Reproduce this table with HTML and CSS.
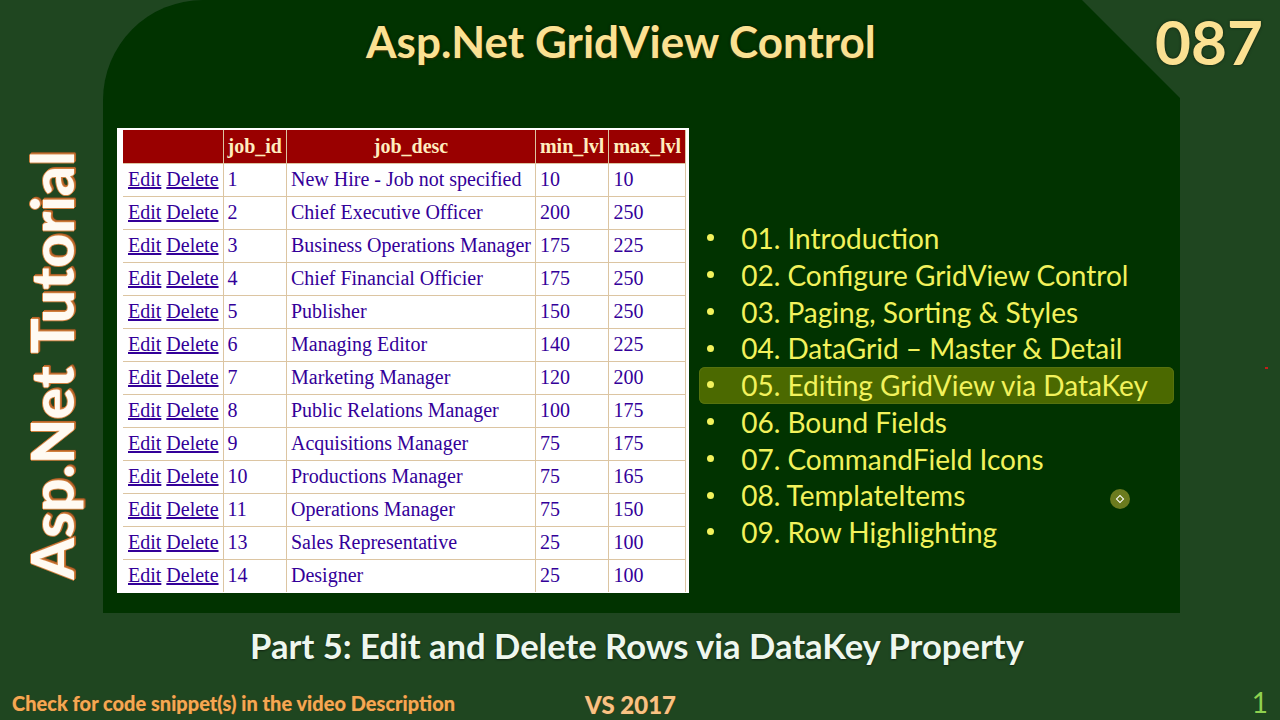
FILE: index.html
```html
<!DOCTYPE html>
<html lang="en">
<head>
<meta charset="utf-8">
<title>Asp.Net GridView Control</title>
<link rel="stylesheet" href="styles.css">
</head>
<body>
<div class="stage">
  <div class="top">
    <div class="side"><div class="vtitle">Asp.Net Tutorial</div></div>
    <div class="panel">
      <div class="head"><h1 class="title">Asp.Net GridView Control</h1></div>
      <div class="content">
        <div class="gridbox">
          <table class="grid">
            <thead>
              <tr><th></th><th>job_id</th><th>job_desc</th><th>min_lvl</th><th>max_lvl</th></tr>
            </thead>
            <tbody>
              <tr><td><a href="#">Edit</a> <a href="#">Delete</a></td><td>1</td><td>New Hire - Job not specified</td><td>10</td><td>10</td></tr>
              <tr><td><a href="#">Edit</a> <a href="#">Delete</a></td><td>2</td><td>Chief Executive Officer</td><td>200</td><td>250</td></tr>
              <tr><td><a href="#">Edit</a> <a href="#">Delete</a></td><td>3</td><td>Business Operations Manager</td><td>175</td><td>225</td></tr>
              <tr><td><a href="#">Edit</a> <a href="#">Delete</a></td><td>4</td><td>Chief Financial Officier</td><td>175</td><td>250</td></tr>
              <tr><td><a href="#">Edit</a> <a href="#">Delete</a></td><td>5</td><td>Publisher</td><td>150</td><td>250</td></tr>
              <tr><td><a href="#">Edit</a> <a href="#">Delete</a></td><td>6</td><td>Managing Editor</td><td>140</td><td>225</td></tr>
              <tr><td><a href="#">Edit</a> <a href="#">Delete</a></td><td>7</td><td>Marketing Manager</td><td>120</td><td>200</td></tr>
              <tr><td><a href="#">Edit</a> <a href="#">Delete</a></td><td>8</td><td>Public Relations Manager</td><td>100</td><td>175</td></tr>
              <tr><td><a href="#">Edit</a> <a href="#">Delete</a></td><td>9</td><td>Acquisitions Manager</td><td>75</td><td>175</td></tr>
              <tr><td><a href="#">Edit</a> <a href="#">Delete</a></td><td>10</td><td>Productions Manager</td><td>75</td><td>165</td></tr>
              <tr><td><a href="#">Edit</a> <a href="#">Delete</a></td><td>11</td><td>Operations Manager</td><td>75</td><td>150</td></tr>
              <tr><td><a href="#">Edit</a> <a href="#">Delete</a></td><td>13</td><td>Sales Representative</td><td>25</td><td>100</td></tr>
              <tr><td><a href="#">Edit</a> <a href="#">Delete</a></td><td>14</td><td>Designer</td><td>25</td><td>100</td></tr>
            </tbody>
          </table>
        </div>
        <ul class="topics">
          <li>01. Introduction</li>
          <li>02. Configure GridView Control</li>
          <li>03. Paging, Sorting &amp; Styles</li>
          <li>04. DataGrid – Master &amp; Detail</li>
          <li class="active">05. Editing GridView via DataKey</li>
          <li>06. Bound Fields</li>
          <li>07. CommandField Icons</li>
          <li>08. TemplateItems</li>
          <li>09. Row Highlighting</li>
        </ul>
      </div>
    </div>
    <div class="rightcol"></div>
  </div>
  <div class="caption">Part 5: Edit and Delete Rows via DataKey Property</div>
  <div class="footer">
    <span class="note">Check for code snippet(s) in the video Description</span>
    <span class="vs">VS 2017</span>
    <span class="pageno">1</span>
  </div>
  <div class="episode">087</div>
  <div class="cursor"><span class="cursor-dot"></span></div>
  <div class="reddot"></div>
</div>
</body>
</html>
```
FILE: styles.css
```css
html, body {
  margin: 0;
  padding: 0;
}
body {
  background: #1f4620;
  font-family: "Lato", "Open Sans", sans-serif;
}
.stage {
  position: relative;
  width: 1280px;
  height: 720px;
  overflow: hidden;
  background: #1f4620;
  display: flex;
  flex-direction: column;
}
.top {
  display: flex;
  height: 613px;
}
.side {
  width: 103px;
  box-sizing: border-box;
  padding-top: 118px;
  display: flex;
  align-items: center;
  justify-content: center;
}
.vtitle {
  writing-mode: vertical-rl;
  transform: rotate(180deg);
  font-family: "Lato", sans-serif;
  font-weight: 900;
  font-size: 59px;
  line-height: 1;
  color: #fffaf2;
  white-space: nowrap;
  text-shadow:
    1px 0 0 #d0813f, -1px 0 0 #d0813f, 0 1px 0 #d0813f, 0 -1px 0 #d0813f,
    2px 1px 0 #b8642a, 1px 2px 0 #b8642a, 2px 2px 1px #8a4a1f;
}
.panel {
  width: 1077px;
  background: #013300;
  border-top-left-radius: 100px;
  clip-path: polygon(0 0, calc(100% - 98px) 0, 100% 98px, 100% 100%, 0 100%);
  display: flex;
  flex-direction: column;
  box-sizing: border-box;
  padding-left: 14px;
}
.rightcol {
  flex: 1;
}
.head {
  height: 128px;
  box-sizing: border-box;
  padding-top: 19px;
  padding-left: 249px;
}
.title {
  margin: 0;
  font-family: "Lato", sans-serif;
  font-weight: 700;
  font-size: 44px;
  line-height: 1;
  color: #fbe192;
  white-space: nowrap;
  text-shadow: 0 0 3px rgba(0, 0, 0, 0.7), 0 1px 2px rgba(120, 80, 0, 0.6);
}
.content {
  display: flex;
  align-items: flex-start;
}
.gridbox {
  background: #ffffff;
  padding: 2px 3px 0 6px;
}
.grid {
  border-collapse: collapse;
  font-family: "Liberation Serif", "Times New Roman", serif;
  font-size: 20px;
  color: #330099;
}
.grid th, .grid td {
  border: 1px solid #dcc5a2;
  padding: 4px 4px 6px 4px;
  line-height: 22px;
  white-space: nowrap;
  text-align: left;
}
.grid th {
  background: #990000;
  color: #ffedbf;
  font-weight: 700;
  text-align: center;
}
.grid tr:first-child th {
  border-top-color: #990000;
}
.grid th:first-child, .grid td:first-child {
  border-left-color: #ffffff;
}
.grid th:first-child {
  border-left-color: #990000;
}
.grid tbody tr:last-child td {
  border-bottom-color: #ffffff;
}
.grid a {
  color: #330099;
  text-decoration: underline;
}
.topics {
  list-style: none;
  margin: 92px 0 0 10px;
  padding: 0;
  width: 475px;
}
.topics li {
  position: relative;
  height: 36.75px;
  line-height: 36.75px;
  padding-left: 42px;
  font-family: "Lato", sans-serif;
  font-size: 28px;
  color: #f2f25c;
  white-space: nowrap;
}
.topics li::before {
  content: "";
  position: absolute;
  left: 8px;
  top: 50%;
  width: 7px;
  height: 7px;
  margin-top: -4px;
  border-radius: 50%;
  background: #f2f25c;
}
.topics li.active {
  background: #4b6900;
  border-radius: 6px;
  box-shadow: inset 0 0 0 1px #56720e;
}
.caption {
  margin-top: 16px;
  padding-right: 6px;
  font-family: "Lato", sans-serif;
  font-weight: 700;
  font-size: 34.6px;
  line-height: 1;
  color: #eef7ee;
  text-align: center;
  white-space: nowrap;
  text-shadow: 0 1px 2px rgba(0, 0, 0, 0.5);
}
.footer {
  flex: 1;
  display: flex;
  align-items: flex-end;
  padding: 0 12px 0 12px;
}
.note {
  width: 573px;
  margin-bottom: 7px;
  font-family: "Lato", sans-serif;
  font-weight: 900;
  font-size: 20px;
  line-height: 1;
  color: #f4a853;
  white-space: nowrap;
  text-shadow: 0 0 1px #7a3d10;
}
.vs {
  margin-bottom: 3px;
  font-family: "Lato", sans-serif;
  font-weight: 900;
  font-size: 24px;
  line-height: 1;
  color: #f8c283;
  white-space: nowrap;
  text-shadow: 0 0 1px #7a3d10;
}
.pageno {
  margin-left: auto;
  margin-bottom: 4px;
  font-family: "Lato", sans-serif;
  font-size: 28px;
  line-height: 1;
  color: #8fd14f;
}
.episode {
  position: absolute;
  top: 10px;
  right: 17px;
  font-family: "Lato", sans-serif;
  font-weight: 700;
  font-size: 62px;
  line-height: 1;
  color: #fbe192;
  text-shadow: 0 0 3px rgba(0, 0, 0, 0.6);
}
.cursor {
  position: absolute;
  left: 1110px;
  top: 489px;
  width: 20px;
  height: 20px;
  border-radius: 50%;
  background: #6b7b1e;
  display: flex;
  align-items: center;
  justify-content: center;
}
.cursor-dot {
  width: 4px;
  height: 4px;
  border: 1px solid #ffffff;
  transform: rotate(45deg);
}
.reddot {
  position: absolute;
  left: 1265px;
  top: 367px;
  width: 3px;
  height: 2px;
  background: #c0201a;
}
```
